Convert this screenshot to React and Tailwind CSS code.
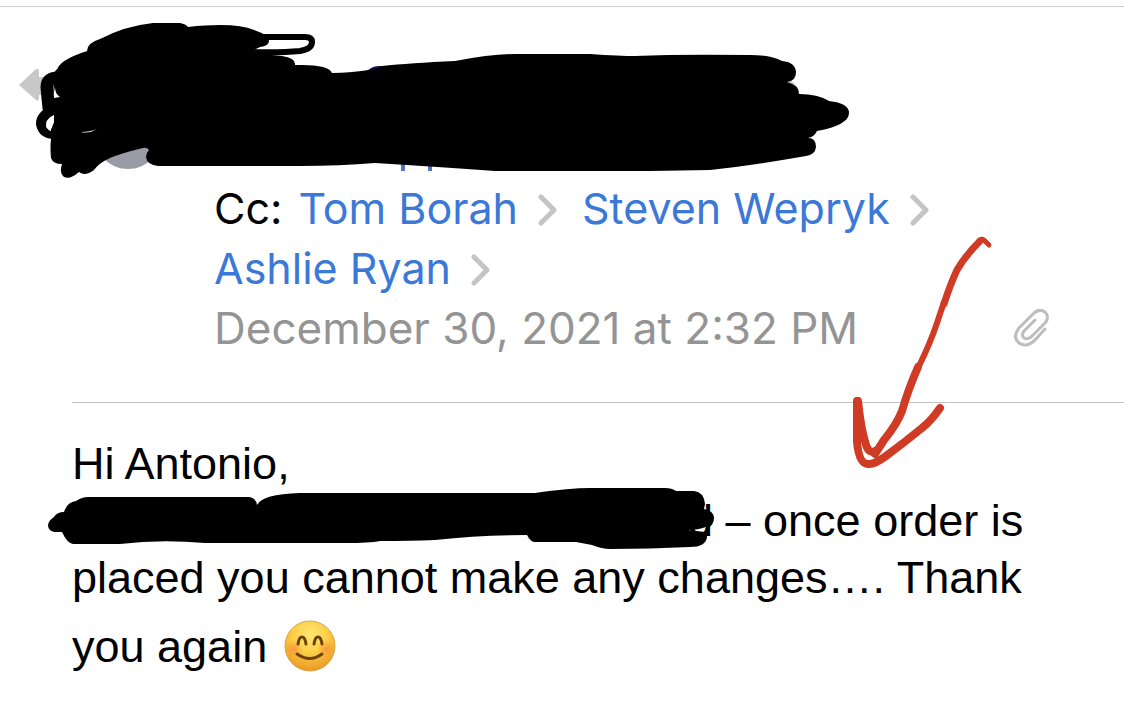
const recipients = ["Tom Borah", "Steven Wepryk", "Ashlie Ryan"];

// Marker strokes over the sender block
const SenderScribble = () => (
  <svg viewBox="0 0 860 171" className="block w-[860px] max-w-full" aria-hidden="true">
    <path d="M19 78 L36 62 Q39 61 39 65 V70 H50 V88 H39 V91 Q39 95 36 93 Z" fill="#c8c8ca" />
    <circle cx="128" cy="128" r="34" fill="#9a9ba6" />
    <path d="M366 66 Q371 58 381 59 L392 66 Z" fill="#14145a" />
    <path d="M401 150h4v14h-4zM428 150h4v14h-4z" fill="#5673c4" />
    <path d="M785 72 Q798 74 799 88 L788 90 Z" fill="#c8c8ca" />
    <path
      d="M57 65 Q56 54 87 44 Q87 36 100 32 Q125 19 153 16 L180 16 Q186 17 188 20 Q235 15 254 23 Q269 28 269 34 Q269 39 260 40 L254 43 Q251 47 240 45 L282 49 Q296 51 295 58 Q329 57 332 66 Q370 65 382 59 Q410 56 455 54 Q492 47 515 47 H590 Q620 49 635 49 Q680 47 750 48 Q770 48 782 54 Q795 55 796 65 Q796 74 787 75 Q799 78 799 87 Q818 87 829 94 Q849 96 849 106 Q849 118 817 124 Q814 130 808 131 Q816 131 816 140 Q815 148 806 149 Q755 158 710 163 L650 164 H495 Q440 160 375 156 Q340 159 300 159 H158 Q147 158 146 150 Q146 146 149 143 Q147 140 143 141 Q122 146 110 151 Q99 156 94 163 Q85 170 79 165 Q70 173 64 170 Q59 166 62 157 Q53 157 51 151 Q50 141 51 132 Q50 120 57 110 L57 65 Z"
    />
    <g fill="none" stroke="#000" strokeLinecap="round" strokeLinejoin="round">
      <path d="M262 30 H305 Q312 30 312 35 Q312 42 300 44 Q280 46 248 45" strokeWidth="6" />
      <path d="M60 71 Q47 70 47 80 Q48 92 49 101 L62 97" strokeWidth="13" />
      <path d="M56 102 Q41 107 41 117 Q43 127 55 127" strokeWidth="10" />
      <path d="M61 68 V130" strokeWidth="14" />
    </g>
    <path d="M55 80 Q53 86 54 91 L60 90 Q55 87 55 80 Z M54 108 Q46 113 46 120 Q49 124 51 124 Q51 114 54 108 Z M81 125 Q90 125 97 122 Q89 127 81 125 Z" fill="#fff" />
  </svg>
);

// Marker strokes over the first part of the message line
const MessageScribble = () => (
  <svg viewBox="47 486 668 64" className="absolute -left-[25px] -top-[6px] h-16 w-[668px] max-w-none" aria-hidden="true">
    <path
      fillRule="evenodd"
      d="M64 512 Q67 502 76 501 Q82 497 88 497 H249 Q256 498 257 505 Q262 494 300 493 H535 Q570 488 590 488 H665 Q672 488 676 491 H694 Q704 492 705 504 L704 509 Q714 511 714 518 Q714 525 707 529 L707 537 Q706 547 690 547 Q650 549 610 549 Q602 549 592 545 L576 542 H534 Q530 541 527 535 Q480 535 435 540 Q410 541 380 541 Q370 543 345 543 H205 Q160 539 120 544 H73 Q67 543 62 532 H55 Q48 531 48 525 Q49 520 54 517 Q57 512 64 512 Z
      M688 530 Q698 530 706 527 L705 532 Z"
    />
  </svg>
);

const RedArrow = () => (
  <svg viewBox="848 230 150 244" className="pointer-events-none absolute right-[126px] top-[230px] w-[150px]" aria-hidden="true">
    <g fill="none" stroke="#cf3b25" strokeLinecap="round" strokeLinejoin="round">
      <path d="M989 245 L984 240 Q981 238 978 242" strokeWidth="5" />
      <path d="M980 241 Q965 256 957 270 Q950 285 944 304" strokeWidth="7" />
      <path d="M944 302 L937 323 Q930 344 918 368" strokeWidth="6" />
      <path d="M918 367 Q908 390 902 411 Q897 424 884 440 L875 454" strokeWidth="8" />
      <path d="M857 401 L857 442 Q859 464 868 464 Q874 465 886 456 Q905 442 922 428 Q931 421 940 408" strokeWidth="8" />
      <path d="M858 401 Q861 430 866 445 Q869 454 875 451" strokeWidth="8" />
    </g>
  </svg>
);

const Chevron = () => (
  <svg viewBox="0 0 20 34" className="ml-5 mr-6 mt-1 h-[34px] w-5" fill="none" stroke="#c4c4c6" strokeWidth="5" strokeLinecap="round" strokeLinejoin="round" aria-hidden="true">
    <path d="M3 4 L16 17 L3 30" />
  </svg>
);

const Paperclip = () => (
  <svg viewBox="0 0 36 40" className="h-10 w-9" fill="none" stroke="#bdbdbf" strokeWidth="3" strokeLinecap="round" strokeLinejoin="round" role="img" aria-label="Attachment">
    <path d="M31 21 L20 33 Q12 40 5 35 Q-2 29 5 20 L19 6 Q25 0 31 4 Q36 9 31 15 L17 29 Q13 32 10 30 Q7 27 10 23 L21 12" />
  </svg>
);

const Smile = () => (
  <svg viewBox="0 0 52 52" className="-mb-[10px] ml-1 mt-[14px] inline-block size-[52px] align-baseline" role="img" aria-label="Smiling face">
    <defs>
      <radialGradient id="face" cx="50%" cy="28%" r="72%">
        <stop offset="0" stopColor="#ffe873" />
        <stop offset="0.5" stopColor="#fccd46" />
        <stop offset="1" stopColor="#ea9824" />
      </radialGradient>
      <radialGradient id="cheek">
        <stop offset="0" stopColor="#f68b36" stopOpacity="0.7" />
        <stop offset="1" stopColor="#f68b36" stopOpacity="0" />
      </radialGradient>
    </defs>
    <circle cx="26" cy="26" r="25" fill="url(#face)" stroke="#d9a54a" />
    <circle cx="10" cy="29" r="9" fill="url(#cheek)" />
    <circle cx="42" cy="29" r="9" fill="url(#cheek)" />
    <g fill="none" stroke="#6b4209" strokeLinecap="round">
      <path d="M14 24 Q15 17 18 17 Q21 17 22 24" strokeWidth="3" />
      <path d="M30 24 Q31 17 34 17 Q37 17 38 24" strokeWidth="3" />
      <path d="M13 34 Q26 43 38 34" strokeWidth="3" />
    </g>
  </svg>
);

const App = () => {
  return (
    <main className="relative min-h-screen overflow-hidden bg-white pt-[6px] text-black">
      <header className="border-t border-[#cfcfcf] font-['Inter',sans-serif] leading-[60px]">
        <SenderScribble />

        <div className="ml-[72px] border-b border-[#c4c4c6] pb-11 pl-[142px] pr-[74px]">
          <div className="flex flex-wrap items-center text-[43px]">
            <span className="mr-4">Cc:</span>
            {recipients.map((name) => (
              <a key={name} href="#" className="flex items-center text-[#3b78d8]">
                {name}
                <Chevron />
              </a>
            ))}
          </div>
          <div className="flex items-center justify-between text-[44px] text-[#949494]">
            <time dateTime="2021-12-30T14:32">December 30, 2021 at 2:32 PM</time>
            <Paperclip />
          </div>
        </div>
      </header>

      <article className="px-[72px] pt-8 font-['Liberation_Sans',Arial,sans-serif] text-[45px] leading-[57px]">
        <p>Hi Antonio,</p>
        <div className="relative">
          <MessageScribble />
          <p>
            <span className="inline-block w-[616px]" />d – once order is placed you cannot make any
            changes…. Thank you again <Smile />
          </p>
        </div>
      </article>

      <RedArrow />
    </main>
  );
};

export default App;
